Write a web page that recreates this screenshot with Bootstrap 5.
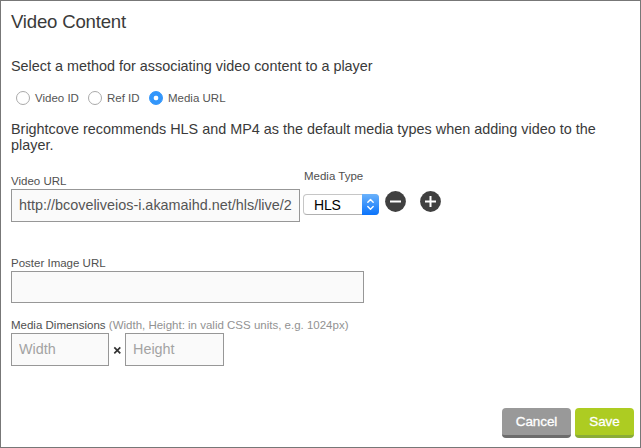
<!DOCTYPE html>
<html lang="en">
<head>
<meta charset="utf-8">
<meta name="viewport" content="width=device-width, initial-scale=1">
<title>Video Content</title>
<link href="https://cdn.jsdelivr.net/npm/bootstrap@5.3.0/dist/css/bootstrap.min.css" rel="stylesheet">
<style>
body{font-family:"Liberation Sans",Arial,sans-serif;color:#3a3a3a;font-size:14.4px;letter-spacing:0;line-height:16px;background:#fff}
.dialog-frame{width:641px;height:448px;border:1px solid #777;padding:11px 6px 9px 10px;overflow:hidden}
.dialog-title{font-size:18.6px;letter-spacing:-.2px;line-height:20px;margin:0 0 26px}
.method-list{height:16px;margin:16px 0 15px 5px;font-size:11.5px;letter-spacing:0;color:#555}
.method-list .form-check-input{width:14px;height:14px;margin:0;border:1px solid #aaa;flex:none;box-shadow:none}
.method-list .form-check-input:checked{background:radial-gradient(circle,#fff 0 2px,#3296fb 2.7px);border-color:#3296fb}
.method-list label{margin-left:5px;white-space:nowrap}
.m-video{width:72px}.m-ref{width:61px}
.field-label{display:block;font-size:11.5px;letter-spacing:0;line-height:14px;margin:0;color:#505050;white-space:nowrap}
.field-label .hint{color:#929292}
.field-input.form-control{height:33px;border:1px solid #979797;border-radius:0;background:#fafafa;color:#555;font-size:14.4px;letter-spacing:0;line-height:18px;padding:4px 7px 5px;box-shadow:none}
.field-input::placeholder{color:#a3a3a3;opacity:1}
.url-row{height:49px;margin-top:16px}
.url-field{width:289px;margin-top:5px}
.url-field .form-control{margin-top:1px}
.type-field{margin-left:3px}
.type-field .field-label{padding-left:1px}
.type-select{width:76px;height:21px;margin-top:11px;border:1px solid #c6c6c6;border-bottom-color:#b0b0b0;border-radius:4px;background:#fff;color:#000;font-size:14px;letter-spacing:-.2px;line-height:21px;padding-left:10px}
.type-arrows{width:17px;height:21px;margin:-1px -1px -1px 0;border-radius:0 4px 4px 0;background:linear-gradient(#6bb2fb,#0a73fb)}
.row-tools{margin:22px 0 0 6px;gap:14px}
.round-btn{width:21px;height:21px;border:0;padding:0;background:none;display:block}
.poster-field{width:353px;margin-top:38px}
.poster-field .form-control{height:32px;margin-top:1px}
.size-field{margin-top:15px}
.size-field .field-label{margin-bottom:1px}
.w-first{width:98px}.w-second{width:99px}
.action-btn.btn{height:30px;border:0;border-bottom:3px solid;border-radius:4px;padding:0;color:#fff;font-size:13.5px;letter-spacing:-.1px;line-height:26px;-webkit-text-stroke:.3px #fff}
.btn-cancel.btn{width:69px;background:#999;border-color:#6c6c6c}
.btn-save.btn{width:59px;background:#adcc22;border-color:#8aac37}
</style>
</head>
<body>
<main class="dialog-frame d-flex flex-column">
  <h1 class="dialog-title fw-normal">Video Content</h1>
  <p class="m-0">Select a method for associating video content to a player</p>
  <div class="method-list d-flex align-items-center">
    <div class="m-video d-flex align-items-center"><input class="form-check-input" type="radio" name="method" id="vid"><label for="vid">Video ID</label></div>
    <div class="m-ref d-flex align-items-center"><input class="form-check-input" type="radio" name="method" id="ref"><label for="ref">Ref ID</label></div>
    <div class="d-flex align-items-center"><input class="form-check-input" type="radio" name="method" id="media" checked><label for="media">Media URL</label></div>
  </div>
  <p class="m-0">Brightcove recommends HLS and MP4 as the default media types when adding video to the<br>player.</p>
  <div class="url-row d-flex align-items-start">
    <div class="url-field"><label class="field-label" for="url">Video URL</label><input id="url" class="form-control field-input" value="http://bcoveliveios-i.akamaihd.net/hls/live/2"></div>
    <div class="type-field"><span class="field-label">Media Type</span>
      <div class="type-select d-flex justify-content-between" role="combobox" aria-label="Media Type" aria-expanded="false"><span>HLS</span><span class="type-arrows"><svg class="d-block" width="17" height="21" viewBox="0 0 17 21" fill="none" stroke="#fff" stroke-width="1.4" stroke-linecap="round" stroke-linejoin="round"><path d="M5.8 8.3 8.5 5.6l2.7 2.7M5.8 12.5l2.7 2.7 2.7-2.7"/></svg></span></div>
    </div>
    <div class="row-tools d-flex">
      <button class="round-btn" aria-label="Remove"><svg class="d-block" width="21" height="21" viewBox="0 0 21 21"><circle cx="10.5" cy="10.5" r="10.4" fill="#404040"/><path d="M5 10.5h11" stroke="#fff" stroke-width="2"/></svg></button>
      <button class="round-btn" aria-label="Add"><svg class="d-block" width="21" height="21" viewBox="0 0 21 21"><circle cx="10.5" cy="10.5" r="10.4" fill="#404040"/><path d="M5 10.5h11M10.5 5v11" stroke="#fff" stroke-width="2"/></svg></button>
    </div>
  </div>
  <div class="poster-field"><label class="field-label" for="poster">Poster Image URL</label><input id="poster" class="form-control field-input"></div>
  <div class="size-field">
    <span class="field-label">Media Dimensions <span class="hint">(Width, Height: in valid CSS units, e.g. 1024px)</span></span>
    <div class="d-flex align-items-center">
      <input class="form-control field-input w-first" placeholder="Width" aria-label="Width">
      <svg width="16" height="10" viewBox="0 0 16 10" aria-hidden="true"><path d="M5.3 2.3l6 6M11.3 2.3l-6 6" stroke="#333" stroke-width="1.7"/></svg>
      <input class="form-control field-input w-second" placeholder="Height" aria-label="Height">
    </div>
  </div>
  <div class="d-flex justify-content-end mt-auto gap-1">
    <button class="btn action-btn btn-cancel">Cancel</button>
    <button class="btn action-btn btn-save">Save</button>
  </div>
</main>
<script src="https://cdn.jsdelivr.net/npm/bootstrap@5.3.0/dist/js/bootstrap.bundle.min.js"></script>
</body>
</html>
